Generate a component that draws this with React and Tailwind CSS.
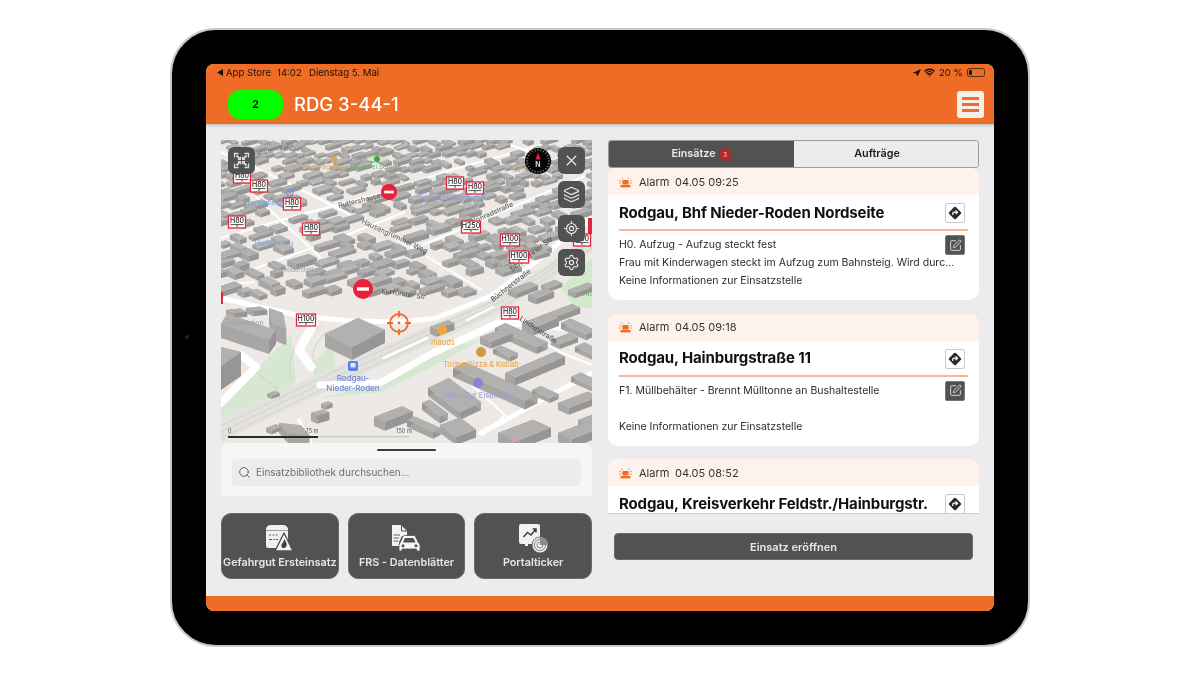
import React from "react";
import { X, Layers, LocateFixed, Settings, Search, SquarePen, Navigation, Wifi } from "lucide-react";

function rng(seed) {
  let a = seed;
  return () => {
    a |= 0; a = (a + 0x6d2b79f5) | 0;
    let t = Math.imul(a ^ (a >>> 15), 1 | a);
    t = (t + Math.imul(t ^ (t >>> 7), 61 | t)) ^ t;
    return ((t ^ (t >>> 14)) >>> 0) / 4294967296;
  };
}

const thinRoads = [
  [[0, 12], [67, 43], [140, 80], [190, 107], [261, 150]],
  [[0, 98], [60, 80], [160, 53], [230, 30], [320, 5]],
  [[30, 130], [113, 100], [184, 72]],
  [[190, 110], [261, 80], [331, 50], [371, 33]],
  [[0, 145], [33, 142]],
  [[20, 43], [63, 83]],
  [[63, 83], [100, 118]],
  [[290, 5], [330, 20]],
];
const thickRoads = [
  { p: [[0, 158], [30, 165], [80, 176], [130, 181], [180, 182], [215, 178], [272, 155], [332, 108], [371, 78]], w: 5 },
  { p: [[99, 245], [159, 243], [212, 213], [279, 182], [371, 190]], w: 7 },
  { p: [[93, 183], [78, 210], [90, 227]], w: 9 },
  { p: [[246, 180], [272, 167]], w: 2.5 },
  { p: [[163, 218], [206, 198]], w: 2.5 },
  { p: [[260, 293], [371, 233]], w: 5 },
  { p: [[232, 228], [284, 275], [262, 295]], w: 2 },
  { p: [[20, 215], [35, 227], [0, 263]], w: 8 },
  { p: [[78, 280], [90, 303]], w: 3 },
  { p: [[300, 190], [341, 213], [371, 225]], w: 2 },
];

function distSeg(px, py, a, b) {
  const dx = b[0] - a[0], dy = b[1] - a[1];
  const t = Math.max(0, Math.min(1, ((px - a[0]) * dx + (py - a[1]) * dy) / (dx * dx + dy * dy)));
  return Math.hypot(px - a[0] - t * dx, py - a[1] - t * dy);
}
function nearRoad(x, y, limit) {
  for (const r of thinRoads) {
    for (let i = 0; i < r.length - 1; i++) if (distSeg(x, y, r[i], r[i + 1]) < limit) return true;
  }
  return false;
}

function mk(x, y, L, W, h, u, v, tone = 0) {
  return {
    pts: [
      [x, y],
      [x + L * u[0], y + L * u[1]],
      [x + L * u[0] + W * v[0], y + L * u[1] + W * v[1]],
      [x + W * v[0], y + W * v[1]],
    ],
    h,
    tone,
  };
}

const generated = (() => {
  const r = rng(17);
  const out = [];
  let y = -6;
  while (y < 172) {
    const s = 0.55 + (y / 200) * 0.55;
    let x = -12 + r() * 10;
    while (x < 375) {
      const L = (9 + r() * 16) * s;
      const W = (6 + r() * 5) * s;
      const h = (4 + r() * 3) * s;
      const jy = (r() - 0.5) * 5 * s;
      const cx = x + L / 2 + W * 0.4;
      const cy = y + jy + W * 0.2;
      const bound = x < 250 ? 158 : 158 - (x - 250) * 0.68;
      const lowerLeft = x < 78 && y > 150;
      if (cy + h < bound && !lowerLeft && !nearRoad(cx, cy + h / 2, 4 * s + 1.5) && r() > 0.08) {
        const flip = r() > 0.72;
        out.push(
          flip
            ? mk(x, y + jy, W * 1.1, L * 0.7, h, [1, -0.3], [0.85, 0.42], r())
            : mk(x, y + jy, L, W, h, [1, -0.3], [0.85, 0.42], r())
        );
      }
      x += L + (1.5 + r() * 5) * s;
    }
    y += 6.5 + y * 0.02;
  }
  return out.sort((a, b) => a.pts[0][1] - b.pts[0][1]);
})();

const A = [1, 0.45], B = [0.95, -0.45], C = [1, -0.38], D = [0.9, 0.4], E = [1, 0.75];
const handBuildings = [
  { pts: [[0, 207], [20, 212], [0, 226]], h: 24, tone: 0 },
  mk(5, 170, 14, 8, 5, [1, -0.1], D),
  mk(25, 168, 14, 8, 5, [1, -0.1], D),
  mk(48, 168, 14, 16, 16, [1, 0.35], [0.2, 1]),
  { pts: [[0, 184], [6, 174], [55, 190], [48, 200]], h: 14, tone: 0 },
  { pts: [[104, 194], [137, 178], [164, 190], [131, 207]], h: 13, tone: 0.2 },
  mk(209, 187, 18, 7, 7, C, D),
  mk(46, 254, 8, 5, 3, C, D),
  mk(45, 288, 10, 6, 4, C, D),
  mk(58, 283, 22, 14, 10, [1, 0.1], [0.6, 0.7]),
  mk(90, 273, 12, 7, 8, [1, -0.3], D),
  mk(100, 264, 7, 5, 4, C, D),
  mk(153, 277, 28, 12, 9, C, D),
  mk(186, 280, 26, 8, 7, A, B),
  mk(219, 285, 20, 16, 8, C, E),
  mk(201, 263, 18, 8, 7, E, B),
  mk(207, 248, 32, 22, 8, E, B),
  mk(232, 228, 72, 13, 9, A, B),
  mk(259, 197, 22, 12, 7, C, D),
  mk(272, 209, 17, 8, 5, A, B),
  mk(274, 188, 42, 11, 7, A, B),
  mk(284, 233, 50, 10, 8, [1, -0.42], A),
  mk(311, 250, 18, 9, 5, A, B),
  mk(301, 183, 26, 12, 8, C, D),
  mk(327, 173, 24, 9, 6, C, D),
  mk(330, 200, 18, 10, 5, C, D),
  mk(340, 183, 25, 10, 6, A, B),
  mk(354, 207, 20, 10, 5, A, B),
  mk(350, 237, 25, 10, 5, A, B),
  mk(337, 263, 30, 12, 7, C, D),
  mk(357, 280, 20, 10, 7, C, D),
  mk(277, 293, 35, 20, 9, C, D),
  mk(337, 293, 30, 15, 9, C, D),
  mk(287, 150, 22, 9, 5, C, D),
  mk(307, 155, 18, 9, 6, C, D),
  mk(347, 150, 20, 8, 5, C, D),
  mk(320, 145, 14, 8, 4, C, D),
].sort((a, b) => a.pts[0][1] - b.pts[0][1]);

function Building({ b }) {
  const n = b.pts.length;
  const walls = [];
  for (let i = 0; i < n; i++) {
    const p = b.pts[i], q = b.pts[(i + 1) % n];
    const rising = (q[1] - p[1]) * (q[0] - p[0]) < 0;
    walls.push(
      <polygon
        key={i}
        points={`${p[0]},${p[1]} ${q[0]},${q[1]} ${q[0]},${q[1] + b.h} ${p[0]},${p[1] + b.h}`}
        fill={rising ? "#979695" : "#a7a6a5"}
      />
    );
  }
  const top = b.tone > 0.6 ? "#bab8b6" : "#b2b1af";
  return (
    <g>
      {walls}
      <polygon points={b.pts.map((p) => p.join(",")).join(" ")} fill={top} />
    </g>
  );
}

const signs = [
  ["H80", 21, 37], ["H80", 38, 46], ["H80", 71, 64], ["H80", 16, 82], ["H80", 90, 89],
  ["H80", 234, 43], ["H80", 254, 48], ["H250", 250, 87], ["H100", 289, 100], ["H100", 298, 117],
  ["H100", 85, 180], ["H80", 289, 173], ["H80", 361, 100],
];

function Sign({ t, x, y }) {
  const w = t.length > 3 ? 19 : 17;
  return (
    <g>
      <rect x={x - w / 2} y={y - 6} width={w} height={12} fill="#fff" stroke="#e0263c" strokeWidth="1.3" />
      <text x={x} y={y + 1.4} textAnchor="middle" fontSize="7" fontWeight="500" fill="#222" fontFamily="Inter, sans-serif">{t}</text>
      <path d={`M${x - w / 2 + 2} ${y + 2.6}H${x + w / 2 - 2}M${x} ${y + 2.6}V${y + 5}`} stroke="#222" strokeWidth="0.8" />
    </g>
  );
}

function NoEntry({ x, y, r }) {
  return (
    <g>
      <circle cx={x} cy={y} r={r} fill="#e8203a" />
      <rect x={x - r * 0.6} y={y - r * 0.17} width={r * 1.2} height={r * 0.34} fill="#fff" />
    </g>
  );
}

function Label({ x, y, s = 7, c, a = "middle", rot, w = 400, o = 1, children }) {
  return (
    <text
      x={x}
      y={y}
      fontSize={s}
      fill={c}
      textAnchor={a}
      fontWeight={w}
      opacity={o}
      fontFamily="Inter, sans-serif"
      transform={rot ? `rotate(${rot} ${x} ${y})` : undefined}
    >
      {children}
    </text>
  );
}

function MapArt() {
  return (
    <svg viewBox="0 0 371 315" className="block w-[371px] h-[315px]">
      <rect width="371" height="315" fill="#ece9e6" />
      <polygon points="37,228 70,195 75,240 55,265 20,280 0,290 0,265" fill="#d6e8d1" />
      <polygon points="90,225 110,205 115,225 95,240" fill="#d6e8d1" />
      <polygon points="99,258 160,252 215,225 260,200 225,208 160,243" fill="#d6e8d1" />
      <polygon points="340,147 371,118 371,168 352,166" fill="#d3e8cd" />
      <polygon points="0,302 0,278 125,222 280,155 371,95 371,112 280,172 125,242" fill="#e4e2df" />
      <g stroke="#cfcdca" strokeWidth="0.8" fill="none">
        <path d="M0 292L125 232L280 162L371 102" />
        <path d="M0 298L125 238L280 168L371 108" />
        <path d="M0 286L125 226L280 158L371 98" />
      </g>
      <g stroke="#c9cfc9" strokeWidth="1.2" fill="none" strokeDasharray="2 1">
        <path d="M100 186Q62 205 70 240" />
        <path d="M110 190Q85 205 95 232" />
        <path d="M35 232L55 248L60 262" />
      </g>
      {thinRoads.map((r, i) => (
        <polyline key={i} points={r.map((p) => p.join(",")).join(" ")} fill="none" stroke="#fff" strokeWidth="2" />
      ))}
      {thickRoads.map((r, i) => (
        <polyline key={i} points={r.p.map((p) => p.join(",")).join(" ")} fill="none" stroke="#fff" strokeWidth={r.w} strokeLinecap="round" strokeLinejoin="round" />
      ))}
      {generated.map((b, i) => <Building key={i} b={b} />)}
      {handBuildings.map((b, i) => <Building key={i} b={b} />)}

      <Label x={55} y={11} s={6} c="#6f6f6f" rot={-14}>Marienstraße</Label>
      <Label x={101} y={29} s={6.5} c="#d7a760">Café Magenta</Label>
      <circle cx={113} cy={19} r={3.5} fill="#d7a760" />
      <ellipse cx={156} cy={19} rx={10} ry={3} fill="#cfe6c5" />
      <circle cx={156} cy={19} r={3} fill="#3aa845" />
      <Label x={154} y={29} s={6.5} c="#6fb56f">Bäckerei Schulz</Label>
      <Label x={303} y={32} s={6.5} c="#d7a760">Cafe Yo</Label>
      <Label x={30} y={46} s={6} c="#dd7a7a">Getränke</Label>
      <Label x={47} y={65} s={7} c="#7aa6e8" a="middle">Gartenbücher</Label>
      <circle cx={69} cy={53} r={3.2} fill="none" stroke="#6e9de0" strokeWidth="1.2" />
      <Label x={235} y={60} s={7} c="#7aa6e8">Hausarzt Gleisstraße</Label>
      <Label x={53} y={106} s={7} c="#7aa6e8">Harald Ring</Label>
      <Label x={80} y={132} s={6.5} c="#9ea3a8">Heidelstation</Label>
      <Label x={118} y={68} s={7} c="#555" rot={-14} a="start">Puttershausen</Label>
      <Label x={140} y={83} s={7} c="#555" rot={25} a="start">Hausengrummer Weg</Label>
      <Label x={252} y={84} s={7} c="#555" rot={-24} a="start">Konradstraße</Label>
      <Label x={160} y={153} s={7} c="#555" rot={8} a="start">Kurfürster Str</Label>
      <Label x={291} y={132} s={7.5} c="#444" rot={-38} a="start">Schweriner Str</Label>
      <Label x={272} y={162} s={7} c="#444" rot={-38} a="start">Büchnerstraße</Label>
      <Label x={298} y={180} s={7} c="#444" rot={33} a="start">Lindenstraße</Label>
      <Label x={362} y={156} s={7} c="#62a862" a="start">Alt</Label>
      <Label x={3} y={185} s={7} c="#9aa0a6" a="start">Trafostation</Label>

      <rect x={127} y={221} width={10} height={10} rx={2} fill="#5a7fe6" />
      <rect x={129.5} y={223} width={5} height={4.5} fill="#dfe6ff" />
      <Label x={132} y={241} s={8} c="#6a85e0" w={500}>Rodgau-</Label>
      <Label x={132} y={251} s={8} c="#6a85e0" w={500}>Nieder-Roden</Label>

      <circle cx={221} cy={190} r={5} fill="#eca838" />
      <Label x={222} y={205} s={7.5} c="#e9a94a" w={500}>mauds</Label>
      <circle cx={260} cy={212} r={5} fill="#d49a38" />
      <Label x={260} y={227} s={7.5} c="#e9a94a" w={500}>Torino Pizza & Kebab</Label>
      <circle cx={257} cy={243} r={5} fill="#8f83cf" />
      <Label x={259} y={258} s={7.5} c="#a79fd6" w={500}>Hotel Zur Eisenbahn</Label>
      <circle cx={295} cy={300} r={4} fill="none" stroke="#e59cb0" strokeWidth="1.2" />

      <rect x={367} y={78} width={6} height={16} fill="#e0263c" />
      <rect x={0} y={152} width={2} height={12} fill="#e0263c" />
      {signs.map(([t, x, y], i) => <Sign key={i} t={t} x={x} y={y} />)}
      <NoEntry x={168} y={52} r={8} />
      <NoEntry x={142} y={149} r={10} />

      <g stroke="#ee6c26" fill="none" strokeWidth="1.8">
        <circle cx={178} cy={183} r={9} />
        <path d="M178 171V177M178 189V195M166 183H172M184 183H190" />
      </g>
      <circle cx={178} cy={183} r={1.4} fill="#ee6c26" />

      <Label x={7} y={293} s={5.5} c="#555" a="start">0</Label>
      <Label x={91} y={293} s={5.5} c="#555">75 m</Label>
      <Label x={183} y={293} s={5.5} c="#555">150 m</Label>
      <rect x={7} y={296} width={181} height={1.4} fill="#c9cbc7" />
      <rect x={7} y={296} width={90} height={2} fill="#1c3318" />
    </svg>
  );
}

function Siren() {
  return (
    <svg width="13" height="11" viewBox="0 0 13 11" className="shrink-0">
      <rect x="1.5" y="8" width="10" height="2.4" fill="#ee6c26" />
      <path d="M3.4 7.6V4.2Q3.4 3 4.6 3H8.4Q9.6 3 9.6 4.2V7.6Z" fill="#ee6c26" />
      <path d="M0.5 3.2L2.3 4.1M12.5 3.2L10.7 4.1M0.3 6H2M12.7 6H11M2.8 0.8L3.8 2.2M10.2 0.8L9.2 2.2" stroke="#ee6c26" strokeWidth="0.9" />
    </svg>
  );
}

function RouteBtn() {
  return (
    <div className="w-5 h-5 shrink-0 bg-white border border-[#c9c9c9] rounded-[2px] flex items-center justify-center">
      <svg width="14" height="14" viewBox="0 0 14 14">
        <rect x="2.2" y="2.2" width="9.6" height="9.6" rx="1.2" fill="#2a2a2a" transform="rotate(45 7 7)" />
        <path d="M4.8 9V7.2Q4.8 6.2 5.8 6.2H9M7.6 4.4L9.5 6.2L7.6 8" fill="none" stroke="#fff" strokeWidth="1.2" />
      </svg>
    </div>
  );
}

function Card({ time, title, l1, l2, clipped }) {
  return (
    <div className="shrink-0 h-[132px] rounded-[10px] bg-white overflow-hidden">
      <div className="h-[27px] bg-[#fdf3ec] flex items-center pl-[11px] pt-[1px] text-[11px] text-[#333]">
        <Siren />
        <span className="ml-[7px] w-[36px]">Alarm</span>
        <span>{time}</span>
      </div>
      <div className="mx-[11px] h-[34px] pt-[2px] flex items-center justify-between pr-[3px]">
        <span className="text-[15px] font-bold text-[#111] tracking-[-0.13px]">{title}</span>
        <RouteBtn />
      </div>
      <div className="mx-[11px] h-[2px] bg-[#f9b795]" />
      {!clipped && (
        <div className="ml-[11px] mr-[14px] mt-[4px] flex justify-between">
          <div className="text-[10.5px] leading-[18px] text-[#2b2b2b] w-[326px] whitespace-nowrap pt-[1px]">
            <div className="h-[18px]">{l1}</div>
            <div className="h-[18px]">{l2}</div>
            <div>Keine Informationen zur Einsatzstelle</div>
          </div>
          <div className="w-5 h-5 shrink-0 bg-[#515353] border border-[#777] rounded-[2px] flex items-center justify-center">
            <SquarePen size={13} color="#e6e6e6" strokeWidth={1.6} />
          </div>
        </div>
      )}
    </div>
  );
}

function MapBtn({ children }) {
  return (
    <div className="w-[27px] h-[27px] rounded-[6px] bg-[#515353] flex items-center justify-center">{children}</div>
  );
}

function Compass() {
  const ticks = [];
  for (let i = 0; i < 24; i++) {
    const a = (i * Math.PI) / 12;
    ticks.push(
      <line key={i} x1={13 + 10 * Math.cos(a)} y1={13 + 10 * Math.sin(a)} x2={13 + 12 * Math.cos(a)} y2={13 + 12 * Math.sin(a)} stroke="#ddd" strokeWidth="0.6" />
    );
  }
  return (
    <svg width="26" height="26" viewBox="0 0 26 26">
      <circle cx="13" cy="13" r="13" fill="#050505" />
      {ticks}
      <polygon points="13,4.5 15.5,11.5 10.5,11.5" fill="#e8203a" />
      <text x="13" y="19" textAnchor="middle" fontSize="7" fontWeight="600" fill="#e5e5e5" fontFamily="Inter, sans-serif">N</text>
    </svg>
  );
}

function ExpandIcon() {
  return (
    <svg width="17" height="17" viewBox="0 0 17 17" fill="none" stroke="#dcdcdc">
      <path d="M1.5 5.5V1.5H5.5M11.5 1.5H15.5V5.5M15.5 11.5V15.5H11.5M5.5 15.5H1.5V11.5" strokeWidth="1.3" />
      <path d="M3.5 3.5L6.8 6.8M13.5 3.5L10.2 6.8M13.5 13.5L10.2 10.2M3.5 13.5L6.8 10.2" strokeWidth="1.8" />
      <path d="M7.5 4.8V7.5H4.8M9.5 4.8V7.5H12.2M9.5 12.2V9.5H12.2M7.5 12.2V9.5H4.8" strokeWidth="1.2" />
    </svg>
  );
}

function HazmatIcon() {
  return (
    <svg width="27" height="28" viewBox="0 0 27 28">
      <path d="M0 6Q0 1 5 1H17Q21 1 22 5V16L17 24H2Q0 24 0 22Z" fill="#f1f1f1" />
      <rect x="0" y="6" width="22" height="0.8" fill="#8a8a8a" />
      <path d="M3 11H5M6.5 11H8M9.5 11H11.5M3 15.5H6M7.5 15.5H9M10 15.5H12" stroke="#555" strokeWidth="1.2" />
      <path d="M18 9L27 27H9Z" fill="#f4f4f4" stroke="#515353" strokeWidth="1.4" strokeLinejoin="round" />
      <path d="M18 15Q21.5 19 20.6 21.5Q19.8 24 18 24Q15.5 24 15.4 21.4Q15.5 19.5 17 18.5Q17.8 17 18 15Z" fill="#3f4141" />
    </svg>
  );
}

function FrsIcon() {
  return (
    <svg width="28" height="29" viewBox="0 0 28 29">
      <path d="M0 1H9L15 7V12H10L7 18V22H0Z" fill="#f2f2f2" />
      <path d="M9.5 1V7H15" fill="none" stroke="#515353" strokeWidth="1" />
      <path d="M1.5 11H8M1.5 14H7M1.5 17H6" stroke="#515353" strokeWidth="0.9" />
      <path d="M8 19L10.8 12.8Q11.4 11.5 13 11.5H21.5Q23 11.5 23.6 12.8L26.5 19Q28 19.5 28 21.5V27H24.5V25H10V27H7V21.5Q7 19.5 8 19Z" fill="#f7f7f7" stroke="#515353" strokeWidth="0.8" />
      <path d="M11 18.5L12.6 14.5Q12.9 14 13.6 14H20.8Q21.5 14 21.8 14.5L23.6 18.5Z" fill="#515353" />
      <circle cx="11" cy="21.8" r="1.5" fill="#515353" />
      <circle cx="24" cy="21.8" r="1.5" fill="#515353" />
    </svg>
  );
}

function TickerIcon() {
  return (
    <svg width="29" height="29" viewBox="0 0 29 29">
      <path d="M2 0H19Q21 0 21 2V14H17L13 20H9V22H6V20H2Q0 20 0 18V2Q0 0 2 0Z" fill="#f2f2f2" />
      <path d="M4.5 13L8.5 8.5L12 11L16.5 5.5M13.6 5H17V8.4" fill="none" stroke="#3f4141" strokeWidth="1.5" />
      <circle cx="21" cy="21" r="8" fill="#e8e8e8" stroke="#515353" strokeWidth="0.8" />
      <circle cx="21" cy="21" r="5.6" fill="none" stroke="#777" strokeWidth="0.8" />
      <circle cx="21" cy="21" r="3" fill="none" stroke="#777" strokeWidth="0.8" />
      <path d="M21 21L21 13A8 8 0 0 1 29 21Z" fill="#8b8d8d" />
    </svg>
  );
}

function Tile({ icon, label }) {
  return (
    <div className="h-[66px] rounded-[10px] bg-[#515353] border border-[#6a6c6c] flex flex-col items-center pt-[9px]">
      <div className="h-[30px] flex items-center justify-center">{icon}</div>
      <span className="mt-[3px] text-[10.8px] font-semibold text-[#e6e6e6] whitespace-nowrap leading-[14px]">{label}</span>
    </div>
  );
}

export default function App() {
  return (
    <div className="w-[1200px] h-[675px] bg-white overflow-hidden pt-[28px] [font-family:Inter,sans-serif]">
      <div className="relative w-[860px] h-[619px] mx-auto rounded-[46px] bg-black border-[2px] border-[#c9c8c3] p-[34px] blur-[0.3px]">
        <div className="absolute left-[13px] top-[305px] w-[4px] h-[4px] rounded-full bg-[#18243a]" />
        <div className="flex flex-col h-full rounded-[8px] overflow-hidden bg-[#ececec]">
          <header className="h-[60px] shrink-0 bg-[#ee6c26] shadow-[0_1px_3px_rgba(0,0,0,0.25)] z-10">
            <div className="h-[18px] flex items-center justify-between pl-[11px] pr-[9px] text-[9.6px] text-[#1a1208]">
              <div className="flex items-center">
                <svg width="6" height="7" viewBox="0 0 6 7" className="mr-[3px]"><polygon points="6,0 6,7 0,3.5" fill="#1a1208" /></svg>
                <span className="w-[51px]">App Store</span>
                <span className="w-[32px]">14:02</span>
                <span>Dienstag 5. Mai</span>
              </div>
              <div className="flex items-center gap-[3px]">
                <Navigation size={8} fill="#1a1208" color="#1a1208" />
                <Wifi size={11} color="#1a1208" strokeWidth={3} />
                <span className="mx-[1px]">20 %</span>
                <div className="relative w-[18px] h-[9px] rounded-[2.5px] border border-[#4d3116] p-[1px]">
                  <div className="w-[3px] h-full bg-[#1a1208] rounded-[1px]" />
                </div>
              </div>
            </div>
            <div className="mt-[8px] h-[29px] flex items-center justify-between pl-[22px] pr-[10px]">
              <div className="flex items-center gap-[11px]">
                <div className="w-[55px] h-[29px] rounded-[12px] bg-[#00ff00] flex items-center justify-center text-[11px] font-semibold text-black">2</div>
                <span className="text-[18.5px] font-medium text-white">RDG 3-44-1</span>
              </div>
              <div className="w-[27px] h-[27px] rounded-[3px] bg-[#f5efeb] flex flex-col justify-center gap-[3.5px] px-[5px]">
                <div className="h-[2.5px] bg-[#ee6c26]" />
                <div className="h-[2.5px] bg-[#ee6c26]" />
                <div className="h-[2.5px] bg-[#ee6c26]" />
              </div>
            </div>
          </header>

          <main className="flex-1 flex gap-[16px] px-[15px] pt-[16px] min-h-0">
            <section className="w-[371px] flex flex-col">
              <div className="relative h-[315px] overflow-hidden">
                <MapArt />
                <div className="absolute left-[7px] top-[7px]">
                  <MapBtn><ExpandIcon /></MapBtn>
                </div>
                <div className="absolute left-[304px] top-[8px]"><Compass /></div>
                <div className="absolute right-[7px] top-[7px] flex flex-col gap-[7px]">
                  <MapBtn><X size={17} color="#e8e8e8" strokeWidth={1.8} /></MapBtn>
                  <MapBtn><Layers size={17} color="#e8e8e8" strokeWidth={1.6} /></MapBtn>
                  <MapBtn><LocateFixed size={17} color="#e8e8e8" strokeWidth={1.6} /></MapBtn>
                  <MapBtn><Settings size={17} color="#e8e8e8" strokeWidth={1.6} /></MapBtn>
                </div>
              </div>
              <div className="relative -mt-[12px] h-[53px] rounded-t-[8px] bg-[#f6f6f6] px-[11px] pt-[6px]">
                <div className="w-[59px] h-[2px] mx-auto bg-[#3c3c3c] rounded-full" />
                <div className="mt-[8px] h-[27px] rounded-[4px] bg-[#ececec] flex items-center pl-[6px] gap-[5px]">
                  <Search size={13} color="#555" strokeWidth={1.6} />
                  <span className="text-[10px] text-[#6e6e6e]">Einsatzbibliothek durchsuchen...</span>
                </div>
              </div>
              <div className="mt-[17px] grid grid-cols-3 gap-[9px]">
                <Tile icon={<HazmatIcon />} label="Gefahrgut Ersteinsatz" />
                <Tile icon={<FrsIcon />} label="FRS - Datenblätter" />
                <Tile icon={<TickerIcon />} label="Portalticker" />
              </div>
            </section>

            <section className="w-[371px] flex flex-col">
              <div className="h-[28px] flex rounded-[3px] overflow-hidden border border-[#9c9c9c]">
                <div className="w-[185px] bg-[#515353] flex items-center justify-center gap-[3px] text-[10.8px] font-semibold text-[#e8e8e8]">
                  Einsätze
                  <span className="w-[13px] h-[13px] rounded-full bg-[#b3262a] text-[6px] font-normal text-[#f0d0d0] flex items-center justify-center">3</span>
                </div>
                <div className="flex-1 bg-[#ececec] flex items-center justify-center pr-[18px] text-[10.8px] font-semibold text-[#1c1c1c]">Aufträge</div>
              </div>
              <div className="h-[346px] shrink-0 overflow-hidden border-b border-[#cfcfcf] flex flex-col gap-[13.5px]">
                <Card time="04.05 09:25" title="Rodgau, Bhf Nieder-Roden Nordseite" l1="H0. Aufzug - Aufzug steckt fest" l2="Frau mit Kinderwagen steckt im Aufzug zum Bahnsteig. Wird durc..." />
                <Card time="04.05 09:18" title="Rodgau, Hainburgstraße 11" l1="F1. Müllbehälter - Brennt Mülltonne an Bushaltestelle" l2="" />
                <Card time="04.05 08:52" title="Rodgau, Kreisverkehr Feldstr./Hainburgstr." clipped />
              </div>
              <div className="mt-[19px] mx-[6px] h-[27px] pt-[1px] rounded-[4px] bg-[#515353] border border-[#6a6c6c] flex items-center justify-center text-[11px] font-semibold text-[#e6e6e6]">
                Einsatz eröffnen
              </div>
            </section>
          </main>

          <footer className="h-[15px] shrink-0 bg-[#ee6c26]" />
        </div>
      </div>
    </div>
  );
}
